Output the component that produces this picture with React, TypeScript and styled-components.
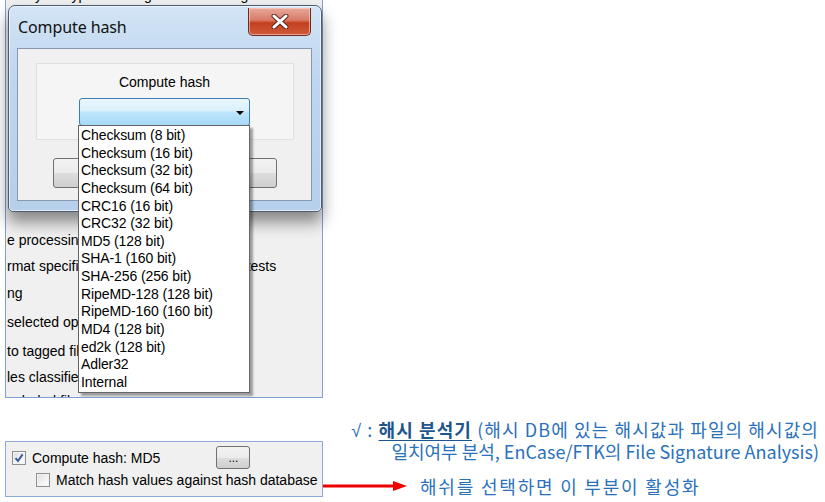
import React from "react";
import styled, { createGlobalStyle } from "styled-components";

const Global = createGlobalStyle`
  html, body { margin: 0; padding: 0; background: #ffffff; }
  body { width: 825px; height: 502px; overflow: hidden; }
`;

const Page = styled.div`
  width: 825px;
  height: 502px;
  display: flex;
  flex-direction: column;
  font-family: "Liberation Sans", Arial, sans-serif;
  color: #000;
`;

const ShotArea = styled.div`
  position: relative;
  width: 330px;
  height: 398px;
`;

const BgWindow = styled.div`
  margin-left: 5px;
  width: 316px;
  height: 397px;
  background: #f0f0f0;
  border: 1px solid #7f9fd6;
  border-top: none;
  overflow: hidden;
  display: flex;
  flex-direction: column;
`;

const BgRow = styled.div<{ $h: number }>`
  height: ${(p) => p.$h}px;
  flex: none;
  display: flex;
  align-items: center;
  font-size: 14px;
  white-space: nowrap;
  padding-left: 1px;
`;

const TopCut = styled(BgRow)`
  margin-top: -10px;
`;

const Dialog = styled.div`
  position: absolute;
  left: 8px;
  top: 5px;
  width: 314px;
  height: 207px;
  box-sizing: border-box;
  border: 1px solid #4a5d74;
  border-radius: 7px 7px 5px 5px;
  background: linear-gradient(180deg, #d3e4f5 0%, #bed6ef 35%, #b6cfea 100%);
  box-shadow: 0 10px 16px rgba(0, 0, 0, 0.45), inset 0 0 0 1px rgba(255, 255, 255, 0.6);
  padding: 0 9px 10px 8px;
  display: flex;
  flex-direction: column;
`;

const TitleBar = styled.div`
  height: 42px;
  display: flex;
  align-items: flex-start;
  justify-content: space-between;
  flex: none;
`;

const Title = styled.div`
  font-family: "Noto Sans", "Open Sans", sans-serif;
  font-size: 16px;
  color: #111;
  padding: 10px 0 0 1px;
  letter-spacing: -0.1px;
`;

const CloseBtn = styled.div`
  margin-top: 2px;
  margin-right: 1px;
  width: 63px;
  height: 28px;
  box-sizing: border-box;
  border: 1px solid #6b2a22;
  border-top: none;
  border-radius: 0 0 5px 5px;
  background: linear-gradient(180deg, #e9a99c 0%, #d97a66 45%, #c2401f 55%, #cf5a3a 100%);
  box-shadow: inset 0 0 0 1px rgba(255, 210, 200, 0.6);
  display: flex;
  align-items: center;
  justify-content: center;
`;

const Client = styled.div`
  flex: 1;
  background: #f0f0f0;
  border: 1px solid #8799ae;
  display: flex;
  flex-direction: column;
  align-items: center;
`;

const GroupBox = styled.div`
  margin-top: 14px;
  width: 258px;
  height: 77px;
  box-sizing: border-box;
  background: #f5f5f5;
  border: 1px solid #e0e0e0;
  display: flex;
  flex-direction: column;
  align-items: center;
`;

const Label = styled.div`
  font-size: 14px;
  line-height: 16px;
  margin-top: 10px;
`;

const Combo = styled.div`
  margin-top: 8px;
  width: 171px;
  height: 28px;
  box-sizing: border-box;
  border: 1px solid #3c7fb1;
  border-radius: 3px;
  background: linear-gradient(180deg, #eaf6fd 0%, #d9f0fc 45%, #bee6fd 50%, #a7d9f5 100%);
  display: flex;
  align-items: center;
  justify-content: flex-end;
  padding-right: 5px;
`;

const Arrow = styled.div`
  width: 0;
  height: 0;
  border-left: 4px solid transparent;
  border-right: 4px solid transparent;
  border-top: 4px solid #000;
  margin-top: 1px;
`;

const ButtonRow = styled.div`
  margin-top: 18px;
  display: flex;
  gap: 16px;
`;

const DlgButton = styled.div`
  width: 104px;
  height: 30px;
  box-sizing: border-box;
  border: 1px solid #707070;
  border-radius: 3px;
  background: linear-gradient(180deg, #f2f2f2 0%, #ebebeb 50%, #dddddd 51%, #cfcfcf 100%);
`;

const DropList = styled.div`
  position: absolute;
  left: 78px;
  top: 125px;
  width: 172px;
  height: 268px;
  box-sizing: border-box;
  background: #ffffff;
  border: 1px solid #646464;
  box-shadow: 3px 3px 2px rgba(0, 0, 0, 0.35);
  padding: 1px 0 0 2px;
`;

const DropItem = styled.div`
  font-size: 14px;
  line-height: 17.64px;
  height: 17.64px;
  white-space: nowrap;
  letter-spacing: -0.1px;
`;

const Bottom = styled.div`
  flex: 1;
  display: flex;
`;

const Panel = styled.div`
  margin: 43px 0 0 5px;
  width: 318px;
  height: 56px;
  box-sizing: border-box;
  background: #f0f0f0;
  border: 1px solid #8fa9d9;
  display: flex;
  flex-direction: column;
  padding: 5px 0 0 6px;
  flex: none;
`;

const OptRow = styled.div<{ $indent?: number; $h: number }>`
  display: flex;
  align-items: center;
  height: ${(p) => p.$h}px;
  padding-left: ${(p) => p.$indent ?? 0}px;
  font-size: 14px;
  white-space: nowrap;
`;

const CheckBox = styled.div`
  width: 14px;
  height: 14px;
  box-sizing: border-box;
  border: 1px solid #8e8f8f;
  background: linear-gradient(135deg, #dcdcdc 0%, #f4f4f4 60%, #ffffff 100%);
  box-shadow: inset 0 0 0 1px #f4f4f4;
  margin-right: 6px;
  display: flex;
  align-items: center;
  justify-content: center;
  flex: none;
`;

const SmallBtn = styled.div`
  margin-left: 56px;
  width: 34px;
  height: 23px;
  box-sizing: border-box;
  border: 1px solid #707070;
  border-radius: 3px;
  background: linear-gradient(180deg, #f2f2f2 0%, #ebebeb 50%, #dddddd 51%, #cfcfcf 100%);
  font-size: 12px;
  line-height: 12px;
  display: flex;
  align-items: flex-end;
  justify-content: center;
  padding-bottom: 4px;
  margin-top: -2px;
`;

const Notes = styled.div`
  flex: 1;
  display: flex;
  flex-direction: column;
  font-family: "Noto Sans CJK KR", "Noto Sans", sans-serif;
  color: #2a71bb;
`;

const NoteBlock = styled.div`
  margin-top: 20px;
  padding-right: 6px;
  display: flex;
  flex-direction: column;
  align-items: flex-end;
  font-size: 18px;
  white-space: nowrap;
`;

const NoteLine = styled.div<{ $ls: number }>`
  height: 22px;
  line-height: 22px;
  letter-spacing: ${(p) => p.$ls}px;
`;

const Radical = styled.span`
  font-family: "Liberation Sans", Arial, sans-serif;
`;

const Strong = styled.span`
  font-weight: 700;
  color: #1d558f;
  text-decoration: underline;
  text-underline-offset: 3px;
`;

const ArrowRow = styled.div`
  margin-top: 13px;
  height: 22px;
  display: flex;
  align-items: center;
  font-size: 18px;
  white-space: nowrap;
`;

const ArrowText = styled.span`
  margin-left: 13px;
  letter-spacing: 1.8px;
`;

const Check = () => (
  <svg width="10" height="10" viewBox="0 0 10 10">
    <path d="M1.5 5.2 L4 8 L8.6 1.4" fill="none" stroke="#3a57a3" strokeWidth="2" />
  </svg>
);

const CloseX = () => (
  <svg width="18" height="15" viewBox="0 0 18 15">
    <path d="M3 2 L15 13 M15 2 L3 13" stroke="#5a2a22" strokeWidth="5" strokeLinecap="round" />
    <path d="M3 2 L15 13 M15 2 L3 13" stroke="#ffffff" strokeWidth="3" strokeLinecap="round" />
  </svg>
);

const RedArrow = () => (
  <svg width="84" height="12" viewBox="0 0 84 12">
    <line x1="0" y1="6" x2="72" y2="6" stroke="#ee0000" strokeWidth="3" />
    <polygon points="70,1 84,6 70,11" fill="#ee0000" />
  </svg>
);

const items = [
  "Checksum (8 bit)",
  "Checksum (16 bit)",
  "Checksum (32 bit)",
  "Checksum (64 bit)",
  "CRC16 (16 bit)",
  "CRC32 (32 bit)",
  "MD5 (128 bit)",
  "SHA-1 (160 bit)",
  "SHA-256 (256 bit)",
  "RipeMD-128 (128 bit)",
  "RipeMD-160 (160 bit)",
  "MD4 (128 bit)",
  "ed2k (128 bit)",
  "Adler32",
  "Internal",
];

const bgRows: [string, number][] = [
  ["e processing options", 27],
  ["rmat specific consistency and integrity tests", 26],
  ["ng", 28],
  ["selected operations", 30],
  ["to tagged files only", 27],
  ["les classified as", 26],
  ["ncluded files", 22],
];

export default function App() {
  return (
    <Page>
      <Global />
      <ShotArea>
        <BgWindow>
          <TopCut $h={10}>Verify file types with signatures and algorithms</TopCut>
          <BgRow $h={226} />
          {bgRows.map(([t, h], i) => (
            <BgRow key={i} $h={h}>
              {t}
            </BgRow>
          ))}
        </BgWindow>
        <Dialog>
          <TitleBar>
            <Title>Compute hash</Title>
            <CloseBtn>
              <CloseX />
            </CloseBtn>
          </TitleBar>
          <Client>
            <GroupBox>
              <Label>Compute hash</Label>
              <Combo>
                <Arrow />
              </Combo>
            </GroupBox>
            <ButtonRow>
              <DlgButton />
              <DlgButton />
            </ButtonRow>
          </Client>
        </Dialog>
        <DropList>
          {items.map((t) => (
            <DropItem key={t}>{t}</DropItem>
          ))}
        </DropList>
      </ShotArea>
      <Bottom>
        <Panel>
          <OptRow $h={22}>
            <CheckBox>
              <Check />
            </CheckBox>
            Compute hash: MD5
            <SmallBtn>...</SmallBtn>
          </OptRow>
          <OptRow $h={22} $indent={24}>
            <CheckBox />
            Match hash values against hash database
          </OptRow>
        </Panel>
        <Notes>
          <NoteBlock>
            <NoteLine $ls={1.1}>
              <Radical>√</Radical> : <Strong>해시 분석기</Strong> (해시 DB에 있는 해시값과 파일의 해시값의
            </NoteLine>
            <NoteLine $ls={0}>일치여부 분석, EnCase/FTK의 File Signature Analysis)</NoteLine>
          </NoteBlock>
          <ArrowRow>
            <RedArrow />
            <ArrowText>해쉬를 선택하면 이 부분이 활성화</ArrowText>
          </ArrowRow>
        </Notes>
      </Bottom>
    </Page>
  );
}
